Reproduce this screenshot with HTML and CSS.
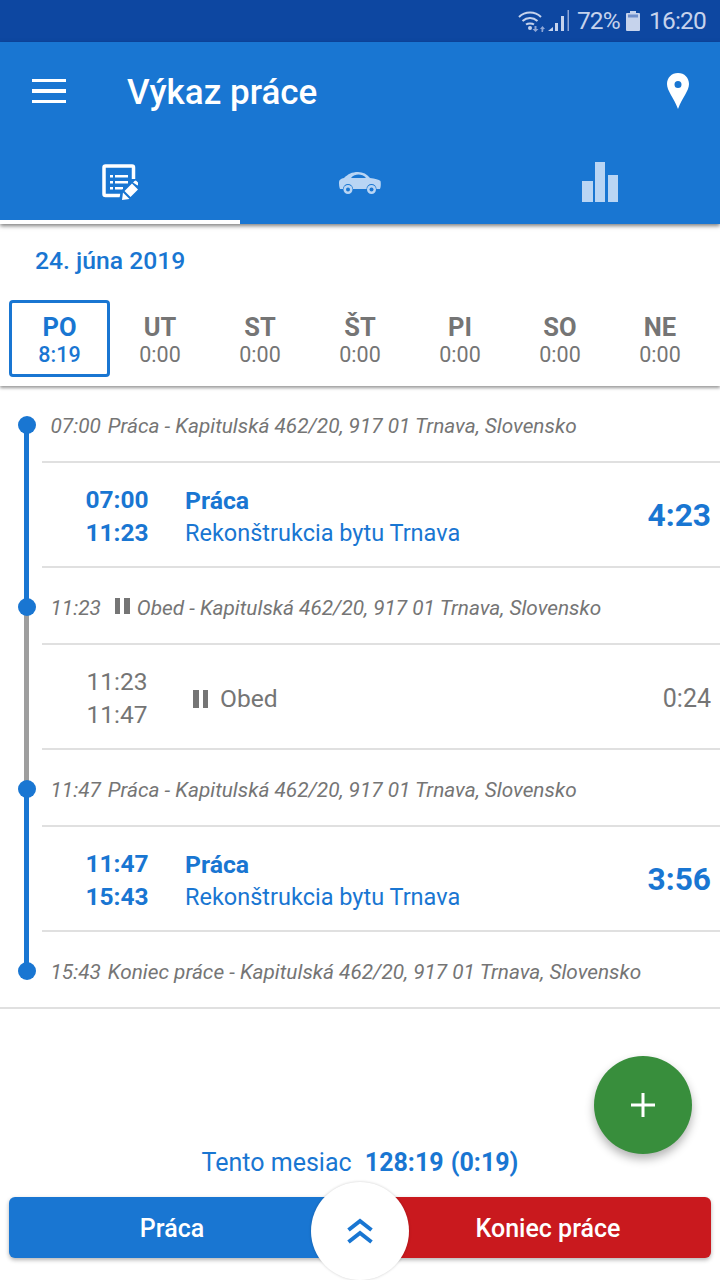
FILE: index.html
```html
<!DOCTYPE html>
<html lang="sk">
<head>
  <meta charset="UTF-8">
  <title>Výkaz práce</title>
  <link rel="stylesheet" href="styles.css">
</head>
<body>
  <div class="screen">
    <!-- Status bar -->
    <div class="status-bar">
      <svg class="status-wifi" width="28" height="22" viewBox="0 0 28 22">
        <path d="M1 7C7 1 17 1 23 7M4.500 11C9 7 15 7 19.500 11M8 14.500C10 13 14 13 16 14.500" fill="none" stroke="#c6d3ec" stroke-width="2"/>
        <circle cx="12" cy="18" r="2" fill="#c6d3ec"/>
        <path d="M16.500 16h2v3h2l-3 3-3-3h2zM25 22h-1.500v-3H22l2.500-3 2.500 3h-1.500z" fill="#8ea6d6"/>
      </svg>
      <svg class="status-signal" width="21" height="21" viewBox="0 0 21 21">
        <path d="M0 21l5-4v4zM7 21v-8h3v8zM13 21V6h3v15z" fill="#c6d3ec"/>
        <path d="M19.500 21V0h1.500v21z" fill="#8ea6d6"/>
      </svg>
      <span class="status-text">72%</span>
      <svg class="status-battery" width="14" height="20" viewBox="0 0 14 20">
        <path d="M4 0h6v2h3a1 1 0 0 1 1 1v16a1 1 0 0 1-1 1H1a1 1 0 0 1-1-1V3a1 1 0 0 1 1-1h3z" fill="#c6d3ec"/>
        <rect x="2" y="3.500" width="10" height="3" fill="#6f8fca"/>
      </svg>
      <span class="status-text">16:20</span>
    </div>

    <!-- App bar -->
    <header class="app-bar">
      <div class="toolbar">
        <div class="menu-icon"><span></span><span></span><span></span></div>
        <h1>Výkaz práce</h1>
        <svg class="pin" width="24" height="36" viewBox="0 0 24 36">
          <path fill-rule="evenodd" d="M12 0C5.500 0 1 4.800 1 11c0 7 6.500 13 11 25 4.500-12 11-18 11-25C23 4.800 18.500 0 12 0zm0 8a3.500 3.500 0 1 1 0 7 3.500 3.500 0 0 1 0-7z" fill="#fff"/>
        </svg>
      </div>
      <nav class="tabs">
        <div class="tab active">
          <svg width="36" height="36" viewBox="0 0 36 36">
            <path d="M31.500 15V3.500a1.500 1.500 0 0 0-1.500-1.500H3.500A1.500 1.500 0 0 0 2 3.500v26.500A1.500 1.500 0 0 0 3.500 31.500h15" fill="none" stroke="#fff" stroke-width="3.500"/>
            <path d="M8 11h3v2.500H8zM8 17h3v2.500H8zM8 23h3v2.500H8zM13 11h13v2.500H13zM13 17h13v2.500H13zM13 23h8v2.500h-8z" fill="#fff"/>
            <path d="M17 36l2-9 11-11 7 7-11 11z" fill="#1976d2"/>
            <path d="M20 36l1-7.500 6.500 6.500zM22.500 27l7.500-7.500 6 6-7.500 7.500zM31 18.500l1.500-1.500a1.500 1.500 0 0 1 2 0l1.500 1.500v2.500l-.5.500z" fill="#fff"/>
          </svg>
        </div>
        <div class="tab car-tab">
          <svg width="42" height="22" viewBox="0 0 42 22">
            <path fill-rule="evenodd" d="M0 10c0-2 2-3.500 5-4C9 2 13 0 19 0c5 0 9 2 12 6 5 .5 9 1.500 10.500 3 .5 2 .5 6-.5 8h-3.500a5 5 0 0 0-10 0H14a5 5 0 0 0-10 0H1c-1-2-1-5-1-7zM12 6h15c-2-3-5-3.500-7.500-3.500S14 3 12 6z" fill="#b9d5f4"/>
            <circle cx="9" cy="17.500" r="4.500" fill="#b9d5f4"/>
            <circle cx="9" cy="17.500" r="2" fill="#1976d2"/>
            <circle cx="32.500" cy="17.500" r="4.500" fill="#b9d5f4"/>
            <circle cx="32.500" cy="17.500" r="2" fill="#1976d2"/>
          </svg>
        </div>
        <div class="tab">
          <div class="bars"><i class="bar-a"></i><i class="bar-b"></i><i class="bar-c"></i></div>
        </div>
      </nav>
    </header>

    <!-- Date and week -->
    <section class="week-panel">
      <div class="date">24. júna 2019</div>
      <div class="week">
        <div class="day selected"><b>PO</b><span>8:19</span></div>
        <div class="day"><b>UT</b><span>0:00</span></div>
        <div class="day"><b>ST</b><span>0:00</span></div>
        <div class="day"><b>ŠT</b><span>0:00</span></div>
        <div class="day"><b>PI</b><span>0:00</span></div>
        <div class="day"><b>SO</b><span>0:00</span></div>
        <div class="day"><b>NE</b><span>0:00</span></div>
      </div>
    </section>

    <!-- Timeline -->
    <main class="timeline">
      <div class="row event">
        <div class="rail first"><span class="dot"></span></div>
        <div class="event-text"><span class="event-time">07:00</span>Práca - Kapitulská 462/20, 917 01 Trnava, Slovensko</div>
      </div>
      <div class="row entry">
        <div class="rail"></div>
        <div class="entry-body work">
          <div class="times"><div>07:00</div><div>11:23</div></div>
          <div class="info"><div class="info-title">Práca</div><div class="info-sub">Rekonštrukcia bytu Trnava</div></div>
          <div class="duration">4:23</div>
        </div>
      </div>
      <div class="row event">
        <div class="rail split"><span class="dot"></span></div>
        <div class="event-text"><span class="event-time">11:23</span><span class="pause small"><i></i><i></i></span>Obed - Kapitulská 462/20, 917 01 Trnava, Slovensko</div>
      </div>
      <div class="row entry">
        <div class="rail grey"></div>
        <div class="entry-body break">
          <div class="times"><div>11:23</div><div>11:47</div></div>
          <div class="info break-info"><span class="pause"><i></i><i></i></span>Obed</div>
          <div class="duration">0:24</div>
        </div>
      </div>
      <div class="row event">
        <div class="rail split-back"><span class="dot"></span></div>
        <div class="event-text"><span class="event-time">11:47</span>Práca - Kapitulská 462/20, 917 01 Trnava, Slovensko</div>
      </div>
      <div class="row entry">
        <div class="rail"></div>
        <div class="entry-body work">
          <div class="times"><div>11:47</div><div>15:43</div></div>
          <div class="info"><div class="info-title">Práca</div><div class="info-sub">Rekonštrukcia bytu Trnava</div></div>
          <div class="duration">3:56</div>
        </div>
      </div>
      <div class="row event last-event">
        <div class="rail last"><span class="dot"></span></div>
        <div class="event-text"><span class="event-time">15:43</span>Koniec práce - Kapitulská 462/20, 917 01 Trnava, Slovensko</div>
      </div>
    </main>

    <!-- Footer -->
    <footer class="summary">
      <div class="month">Tento mesiac <b>128:19 (0:19)</b></div>
      <div class="actions">
        <button class="action start">Práca</button>
        <button class="action stop">Koniec práce</button>
        <div class="expand">
          <svg width="28" height="28" viewBox="0 0 28 28">
            <path d="M2.500 13L14 4l11.500 9M2.500 25L14 16l11.500 9" fill="none" stroke="#1976d2" stroke-width="4"/>
          </svg>
        </div>
      </div>
    </footer>

    <div class="fab">
      <svg width="26" height="26" viewBox="0 0 26 26"><path d="M13 1v24M1 13h24" stroke="#fff" stroke-width="3"/></svg>
    </div>
  </div>
</body>
</html>
```

FILE: styles.css
```css
* {
  box-sizing: border-box;
}
body {
  margin: 0;
  font-family: Roboto, "Liberation Sans", sans-serif;
  background: #fff;
}
.screen {
  position: relative;
  width: 720px;
  height: 1280px;
  overflow: hidden;
  display: flex;
  flex-direction: column;
}

/* Status bar */
.status-bar {
  height: 42px;
  background: #0d47a1;
  display: flex;
  align-items: center;
  justify-content: flex-end;
  padding-right: 14px;
  color: #c6d3ec;
}
.status-text {
  font-size: 24.500px;
  line-height: 42px;
  letter-spacing: -0.8px;
}
.status-signal {
  margin: 0 8px 2px 2px;
}
.status-battery {
  margin: 0 9px 0 6px;
}

/* App bar */
.app-bar {
  position: relative;
  z-index: 2;
  height: 182px;
  background: #1976d2;
  box-shadow: 0 2px 4px rgba(0,0,0,0.5);
}
.toolbar {
  height: 98px;
  display: flex;
  align-items: center;
  padding-left: 32px;
}
.menu-icon {
  width: 34px;
  display: flex;
  flex-direction: column;
  gap: 7px;
}
.menu-icon span {
  height: 3.500px;
  background: #fff;
}
.toolbar h1 {
  margin: 2px 0 0 61px;
  font-size: 35px;
  font-weight: 500;
  color: #fff;
}
.pin {
  margin-left: auto;
  margin-right: 30px;
}
.tabs {
  height: 84px;
  display: flex;
}
.tab {
  width: 240px;
  display: flex;
  align-items: flex-start;
  justify-content: center;
  padding-top: 24px;
}
.tab.active {
  border-bottom: 4px solid #fff;
}
.tab.car-tab {
  padding-top: 32px;
}
.bars {
  width: 36px;
  height: 40px;
  display: flex;
  align-items: flex-end;
  justify-content: space-between;
  margin-top: -2px;
}
.bars i {
  width: 10.500px;
  background: #b9d5f4;
}
.bar-a { height: 21px; }
.bar-b { height: 40px; }
.bar-c { height: 27px; }

/* Date and week */
.week-panel {
  position: relative;
  z-index: 1;
  height: 162px;
  background: #fff;
  box-shadow: 0 2px 3px rgba(0,0,0,0.4);
}
.date {
  padding: 20px 0 0 35px;
  height: 76px;
  font-size: 24.700px;
  line-height: 34px;
  font-weight: 500;
  color: #1976d2;
}
.week {
  display: flex;
  padding: 0 10px;
}
.day {
  width: 100px;
  height: 77px;
  padding: 4px 0 0 2px;
  display: flex;
  flex-direction: column;
  align-items: center;
  justify-content: center;
  color: #757575;
}
.day b {
  font-size: 25.500px;
  line-height: 28px;
  font-weight: 700;
}
.day span {
  font-size: 21.500px;
  line-height: 27px;
}
.day.selected {
  width: 101px;
  margin: 0 -1px 0 -1px;
  padding: 3px 0 0;
  border: 3px solid #1976d2;
  border-radius: 4px;
  color: #1976d2;
}
.day.selected span {
  font-weight: 500;
}

/* Timeline */
.timeline {
  flex: 1;
}
.row {
  display: flex;
}
.rail {
  position: relative;
  width: 42px;
  flex: none;
}
.rail::before {
  content: "";
  position: absolute;
  top: 0;
  bottom: 0;
  left: 24px;
  width: 5px;
  background: #1976d2;
}
.rail.grey::before {
  background: #9e9e9e;
}
.rail.first::before {
  top: 39px;
}
.rail.split::before {
  background: linear-gradient(#1976d2 40px, #9e9e9e 40px);
}
.rail.split-back::before {
  background: linear-gradient(#9e9e9e 39px, #1976d2 39px);
}
.rail.last::before {
  bottom: auto;
  height: 39px;
}
.dot {
  position: absolute;
  top: 30px;
  left: 18px;
  width: 18px;
  height: 18px;
  border-radius: 50%;
  background: #1976d2;
}
.event {
  height: 77px;
}
.event-text {
  flex: 1;
  padding: 24px 0 0 8.500px;
  border-bottom: 2px solid #e0e0e0;
  font-size: 20.800px;
  line-height: 32px;
  font-style: italic;
  color: #757575;
  white-space: nowrap;
}
.event-time {
  margin-right: 7px;
}
.last-event .event-text {
  border-bottom: none;
}
.last-event {
  border-bottom: 2px solid #e0e0e0;
}
.pause {
  display: inline-flex;
  gap: 4px;
  margin-right: 6px;
  vertical-align: 1px;
}
.pause i {
  width: 5.500px;
  height: 18px;
  background: #757575;
}
.pause.small {
  margin-right: 7px;
  margin-left: 7px;
}
.pause.small i {
  height: 16px;
}
.entry {
  height: 105px;
}
.entry-body {
  flex: 1;
  display: flex;
  align-items: center;
  padding: 4px 9px 0 0;
  border-bottom: 2px solid #e0e0e0;
}
.times {
  width: 143px;
  margin-top: -2px;
  padding-right: 94px;
  font-size: 24.500px;
  line-height: 33px;
}
.times div {
  width: 150px;
  text-align: center;
}
.info {
  flex: 1;
}
.info-title {
  font-size: 24.800px;
  line-height: 33px;
  font-weight: 700;
}
.info-sub {
  font-size: 23.500px;
  line-height: 33px;
}
.duration {
  font-size: 25px;
}
.work {
  color: #1976d2;
}
.work .times {
  font-weight: 700;
}
.work .duration {
  margin-top: -2px;
  font-size: 31.700px;
  font-weight: 700;
}
.break {
  color: #757575;
}
.break-info {
  display: flex;
  align-items: center;
  padding-left: 8px;
  font-size: 24.600px;
}
.break-info .pause {
  margin-right: 12px;
}

/* Footer */
.summary {
  height: 136px;
  padding-top: 5px;
}
.month {
  height: 28px;
  line-height: 28px;
  text-align: center;
  color: #1976d2;
  font-size: 25px;
}
.month b {
  margin-left: 7px;
  font-weight: 700;
  word-spacing: 1px;
}
.actions {
  position: relative;
  display: flex;
  justify-content: space-between;
  padding: 0 9px;
  margin-top: 20px;
}
.action {
  width: 326px;
  height: 61px;
  padding: 2px 0 0;
  border: none;
  color: #fff;
  font-family: inherit;
  font-size: 25px;
  font-weight: 500;
  box-shadow: 0 2px 4px rgba(0,0,0,0.3);
}
.start {
  background: #1976d2;
  border-radius: 6px 0 0 6px;
}
.stop {
  background: #c9191e;
  border-radius: 0 6px 6px 0;
}
.expand {
  position: absolute;
  left: 311px;
  top: -15px;
  width: 98px;
  height: 98px;
  border-radius: 50%;
  background: #fff;
  box-shadow: 0 0 3px rgba(0,0,0,0.2);
  display: flex;
  align-items: center;
  justify-content: center;
}
.fab {
  position: absolute;
  left: 594px;
  top: 1056px;
  width: 98px;
  height: 98px;
  border-radius: 50%;
  background: #388e3c;
  box-shadow: 0 5px 10px rgba(0,0,0,0.3);
  display: flex;
  align-items: center;
  justify-content: center;
}
```
